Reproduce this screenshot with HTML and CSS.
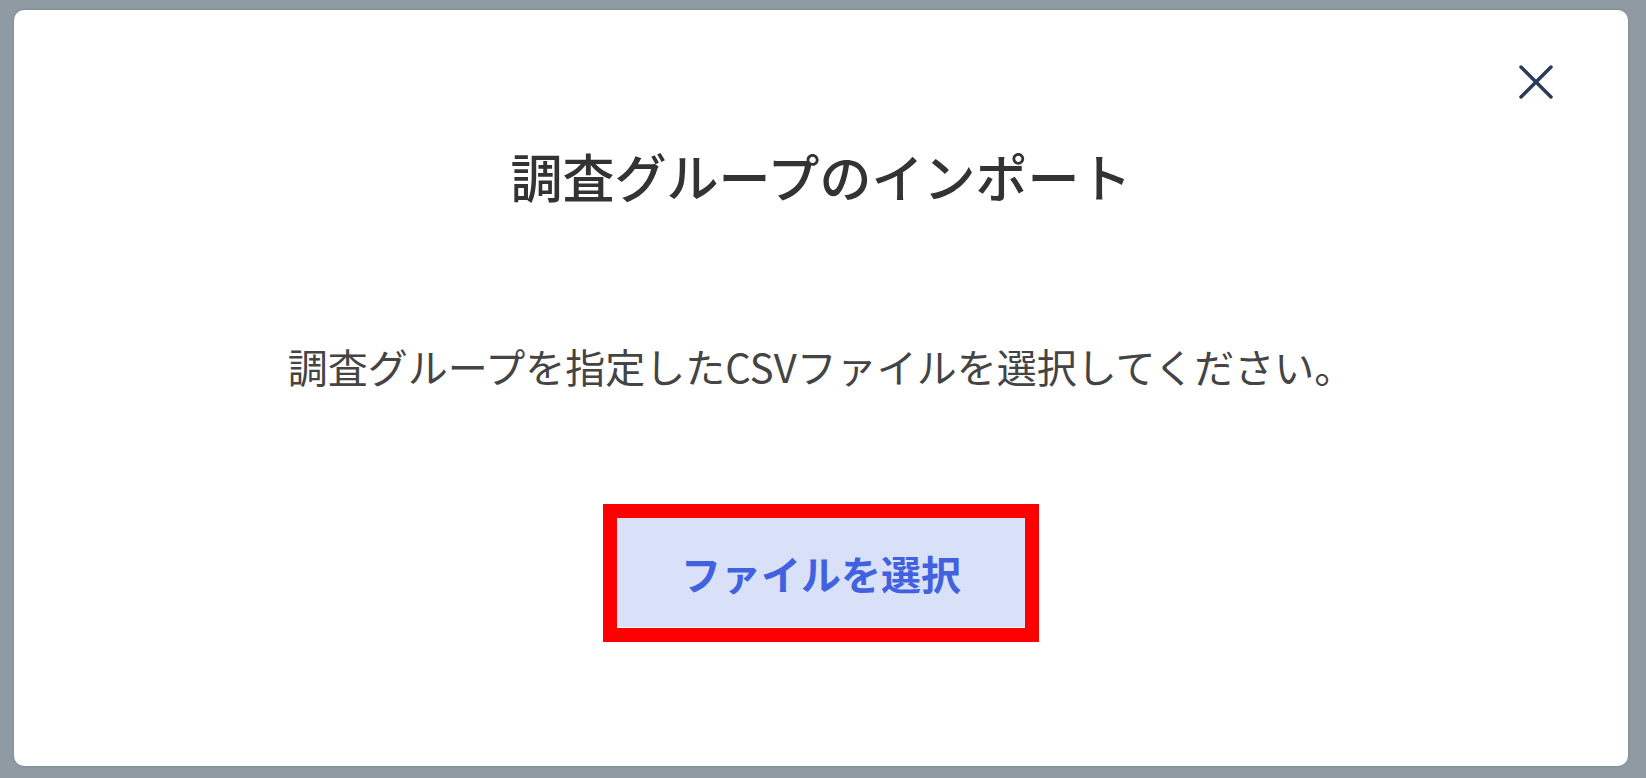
FILE: index.html
```html
<!DOCTYPE html>
<html lang="ja">
<head>
    <meta charset="UTF-8">
    <meta name="viewport" content="width=device-width, initial-scale=1.0">
    <title>調査グループのインポート</title>
    <link rel="stylesheet" href="styles.css">
</head>
<body>
    <div class="dialog">
        <button class="close-button" aria-label="閉じる">
            <svg width="34" height="34" viewBox="0 0 34 34">
                <path d="M2 2 L32 32 M32 2 L2 32" stroke="#2c3b55" stroke-width="3.5" stroke-linecap="round" fill="none"/>
            </svg>
        </button>
        <div class="dialog-title">調査グループのインポート</div>
        <div class="dialog-text">調査グループを指定したCSVファイルを選択してください。</div>
        <div class="highlight">
            <button class="select-button">ファイルを選択</button>
        </div>
    </div>
</body>
</html>
```

FILE: styles.css
```css
body {
    margin: 0;
    height: 778px;
    box-sizing: border-box;
    padding: 10px 18px 12px 14px;
    background-color: #8f9aa2;
    font-family: "Noto Sans CJK JP", "Noto Sans", sans-serif;
    display: flex;
}

.dialog {
    position: relative;
    flex: 1;
    display: flex;
    flex-direction: column;
    align-items: center;
    padding-top: 136px;
    background-color: #fff;
    border-radius: 10px;
    box-shadow: 0 0 3px rgba(0, 0, 0, 0.15);
}

.close-button {
    position: absolute;
    top: 55px;
    right: 75px;
    width: 34px;
    height: 34px;
    padding: 0;
    border: none;
    background: none;
    cursor: pointer;
}

.dialog-title {
    font-size: 52px;
    line-height: 60px;
    font-weight: 500;
    color: #333;
}

.dialog-text {
    margin-top: 136px;
    font-size: 40px;
    line-height: 48px;
    color: #444;
}

.highlight {
    margin-top: 114px;
    border: 14px solid #ff0000;
    display: flex;
}

.select-button {
    width: 408px;
    height: 110px;
    border: none;
    border-bottom: 1px solid #fff;
    background-color: #d9e1f8;
    color: #4261e0;
    font-family: inherit;
    font-size: 40px;
    font-weight: 700;
    cursor: pointer;
}
```
